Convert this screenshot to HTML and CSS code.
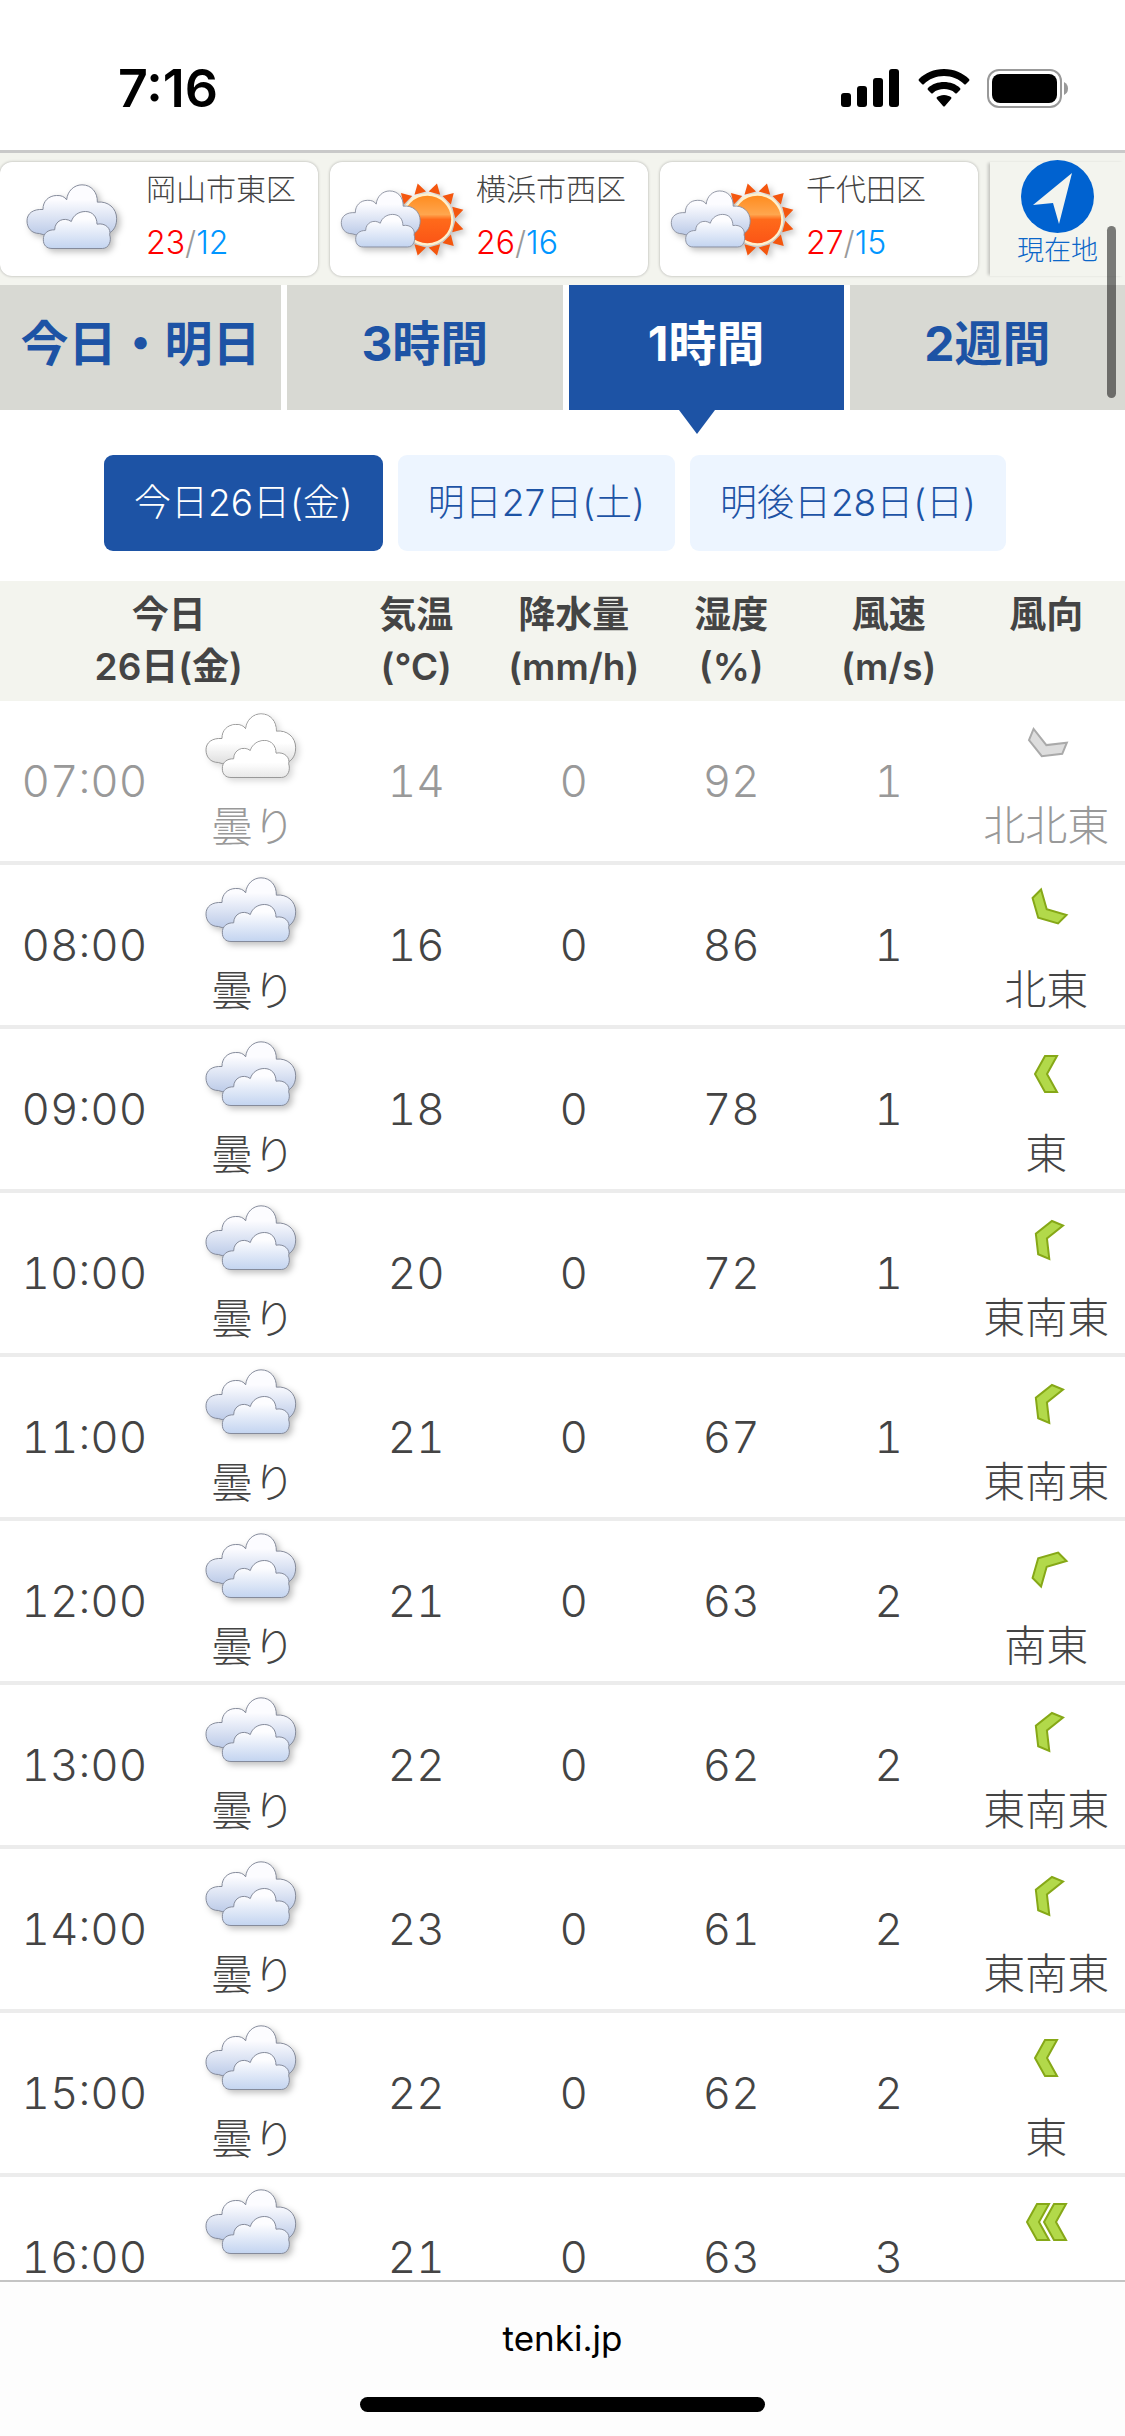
FILE: index.html
```html
<!DOCTYPE html>
<html lang="ja">
<head>
    <meta charset="UTF-8">
    <meta name="viewport" content="width=device-width, initial-scale=1.0">
    <title>1時間天気 - tenki.jp</title>
    <link rel="stylesheet" href="styles.css">
</head>
<body>
    <!-- shared icons -->
    <svg class="defs" aria-hidden="true">
        <defs>
            <linearGradient id="cloudBack" x1="0" y1="0" x2="0" y2="1">
                <stop offset="0.3" stop-color="#fcfcff"/>
                <stop offset="1" stop-color="#bccbe8"/>
            </linearGradient>
            <linearGradient id="cloudFront" x1="0" y1="0" x2="0" y2="1">
                <stop offset="0.2" stop-color="#fdfdff"/>
                <stop offset="1" stop-color="#c3d4f0"/>
            </linearGradient>
            <linearGradient id="sunFill" x1="0" y1="0" x2="0" y2="1">
                <stop offset="0" stop-color="#ff8a1c"/>
                <stop offset="0.4" stop-color="#ffa64e"/>
                <stop offset="0.5" stop-color="#ff6a1a"/>
                <stop offset="1" stop-color="#fb5416"/>
            </linearGradient>
            <path id="ray" d="M-18 -82L0 -112L18 -82Z"/>
            <g id="cloudShape" stroke="#858b9b" stroke-width="3" stroke-linejoin="round">
                <path fill="url(#cloudBack)" d="M46 160C22 160 9 143 9 122C9 100 27 86 57 88C56 64 74 46 98 46C112 45 122 50 128 59C130 33 150 14 174 14C202 14 221 36 220 66C252 62 278 84 278 116C278 144 262 162 238 164L60 164Z"/>
                <path fill="url(#cloudFront)" d="M84 205C68 205 58 195 58 179C57 160 72 148 92 149C92 122 120 109 142 124C148 104 166 94 184 94C206 94 219 110 219 132C245 127 262 146 257 164C263 180 256 205 235 205Z"/>
            </g>
            <symbol id="cloud" viewBox="0 0 300 230">
                <use href="#cloudShape"/>
            </symbol>
            <symbol id="cloudSun" viewBox="0 0 390 230">
                <g transform="translate(268 118)">
                    <g fill="#f4560e">
                        <use href="#ray" transform="rotate(15)"/>
                        <use href="#ray" transform="rotate(45)"/>
                        <use href="#ray" transform="rotate(75)"/>
                        <use href="#ray" transform="rotate(105)"/>
                        <use href="#ray" transform="rotate(135)"/>
                        <use href="#ray" transform="rotate(165)"/>
                        <use href="#ray" transform="rotate(195)"/>
                        <use href="#ray" transform="rotate(225)"/>
                        <use href="#ray" transform="rotate(255)"/>
                        <use href="#ray" transform="rotate(285)"/>
                        <use href="#ray" transform="rotate(315)"/>
                        <use href="#ray" transform="rotate(345)"/>
                    </g>
                    <circle r="75" fill="url(#sunFill)" stroke="#fff0cc" stroke-width="7"/>
                </g>
                <use href="#cloudShape" transform="translate(2 20) scale(0.88)"/>
            </symbol>
            <path id="chevron" d="M-1 -18L11 -18L1 0L11 18L-1 18L-11 0Z"/>
            <symbol id="wind" viewBox="-30 -30 60 60">
                <use href="#chevron"/>
            </symbol>
            <symbol id="windStrong" viewBox="-30 -30 60 60">
                <use href="#chevron" x="-8"/>
                <use href="#chevron" x="9"/>
            </symbol>
        </defs>
    </svg>

    <div class="status-bar">
        <span class="clock">7:16</span>
        <div class="status-icons">
            <svg width="60" height="38" viewBox="0 0 60 38">
                <rect x="0" y="24" width="10" height="14" rx="3"/>
                <rect x="16" y="17" width="10" height="21" rx="3"/>
                <rect x="32" y="9" width="10" height="29" rx="3"/>
                <rect x="48" y="0" width="10" height="38" rx="3"/>
            </svg>
            <svg width="52" height="38" viewBox="0 0 52 38">
                <path d="M26 0C36 0 45 4 51 10Q52 11 51 12L48 15Q47 16 46 15C41 10 34 7 26 7C18 7 11 10 6 15Q5 16 4 15L1 12Q0 11 1 10C7 4 16 0 26 0Z"/>
                <path d="M26 13C32 13 38 15 42 19Q43 20 42 21L39 24Q38 25 37 24C34 21 30 20 26 20C22 20 18 21 15 24Q14 25 13 24L10 21Q9 20 10 19C14 15 20 13 26 13Z"/>
                <path d="M26 26C29 26 31 27 33 28Q34 29 33 30L27 37Q26 38 25 37L19 30Q18 29 19 28C21 27 23 26 26 26Z"/>
            </svg>
            <svg width="82" height="39" viewBox="0 0 82 39">
                <rect x="1" y="1" width="73" height="37" rx="11" fill="none" stroke="#999" stroke-width="2"/>
                <rect x="5" y="5" width="65" height="29" rx="8"/>
                <path d="M77 13Q81 15 81 19.500Q81 24 77 26Z" fill="#999"/>
            </svg>
        </div>
    </div>

    <main class="page">
        <div class="cities">
            <a href="#" class="city">
                <svg class="city-icon cloud"><use href="#cloud"/></svg>
                <span class="city-text">
                    <span class="city-name">岡山市東区</span>
                    <span class="city-temp"><span class="high">23</span>/<span class="low">12</span></span>
                </span>
            </a>
            <a href="#" class="city">
                <svg class="city-icon cloud-sun"><use href="#cloudSun"/></svg>
                <span class="city-text">
                    <span class="city-name">横浜市西区</span>
                    <span class="city-temp"><span class="high">26</span>/<span class="low">16</span></span>
                </span>
            </a>
            <a href="#" class="city">
                <svg class="city-icon cloud-sun"><use href="#cloudSun"/></svg>
                <span class="city-text">
                    <span class="city-name">千代田区</span>
                    <span class="city-temp"><span class="high">27</span>/<span class="low">15</span></span>
                </span>
            </a>
            <button type="button" class="here">
                <svg width="73" height="73" viewBox="0 0 73 73">
                    <circle cx="36.500" cy="36.500" r="36.500" fill="#0062d0"/>
                    <path fill="#f3f4ee" d="M51 13L38 64L32 43L12 45Z"/>
                </svg>
                <span>現在地</span>
            </button>
        </div>

        <nav class="tabs">
            <a href="#">今日・明日</a>
            <a href="#">3時間</a>
            <a href="#" class="active">1時間</a>
            <a href="#">2週間</a>
        </nav>

        <div class="days">
            <button type="button" class="active">今日26日(金)</button>
            <button type="button">明日27日(土)</button>
            <button type="button">明後日28日(日)</button>
        </div>

        <table class="forecast">
            <colgroup>
                <col class="col-wide"><col class="col-wide"><col><col><col><col><col>
            </colgroup>
            <thead>
                <tr>
                    <th colspan="2">今日<br>26日(金)</th>
                    <th>気温<br>(℃)</th>
                    <th>降水量<br>(mm/h)</th>
                    <th>湿度<br>(%)</th>
                    <th>風速<br>(m/s)</th>
                    <th>風向</th>
                </tr>
            </thead>
            <tbody>
                <tr class="past">
                    <td>07:00</td>
                    <td class="pic"><svg class="cloud"><use href="#cloud"/></svg><p>曇り</p></td>
                    <td>14</td><td>0</td><td>92</td><td>1</td>
                    <td class="pic"><svg class="wind nne"><use href="#wind"/></svg><p>北北東</p></td>
                </tr>
                <tr>
                    <td>08:00</td>
                    <td class="pic"><svg class="cloud"><use href="#cloud"/></svg><p>曇り</p></td>
                    <td>16</td><td>0</td><td>86</td><td>1</td>
                    <td class="pic"><svg class="wind ne"><use href="#wind"/></svg><p>北東</p></td>
                </tr>
                <tr>
                    <td>09:00</td>
                    <td class="pic"><svg class="cloud"><use href="#cloud"/></svg><p>曇り</p></td>
                    <td>18</td><td>0</td><td>78</td><td>1</td>
                    <td class="pic"><svg class="wind"><use href="#wind"/></svg><p>東</p></td>
                </tr>
                <tr>
                    <td>10:00</td>
                    <td class="pic"><svg class="cloud"><use href="#cloud"/></svg><p>曇り</p></td>
                    <td>20</td><td>0</td><td>72</td><td>1</td>
                    <td class="pic"><svg class="wind ese"><use href="#wind"/></svg><p>東南東</p></td>
                </tr>
                <tr>
                    <td>11:00</td>
                    <td class="pic"><svg class="cloud"><use href="#cloud"/></svg><p>曇り</p></td>
                    <td>21</td><td>0</td><td>67</td><td>1</td>
                    <td class="pic"><svg class="wind ese"><use href="#wind"/></svg><p>東南東</p></td>
                </tr>
                <tr>
                    <td>12:00</td>
                    <td class="pic"><svg class="cloud"><use href="#cloud"/></svg><p>曇り</p></td>
                    <td>21</td><td>0</td><td>63</td><td>2</td>
                    <td class="pic"><svg class="wind se"><use href="#wind"/></svg><p>南東</p></td>
                </tr>
                <tr>
                    <td>13:00</td>
                    <td class="pic"><svg class="cloud"><use href="#cloud"/></svg><p>曇り</p></td>
                    <td>22</td><td>0</td><td>62</td><td>2</td>
                    <td class="pic"><svg class="wind ese"><use href="#wind"/></svg><p>東南東</p></td>
                </tr>
                <tr>
                    <td>14:00</td>
                    <td class="pic"><svg class="cloud"><use href="#cloud"/></svg><p>曇り</p></td>
                    <td>23</td><td>0</td><td>61</td><td>2</td>
                    <td class="pic"><svg class="wind ese"><use href="#wind"/></svg><p>東南東</p></td>
                </tr>
                <tr>
                    <td>15:00</td>
                    <td class="pic"><svg class="cloud"><use href="#cloud"/></svg><p>曇り</p></td>
                    <td>22</td><td>0</td><td>62</td><td>2</td>
                    <td class="pic"><svg class="wind"><use href="#wind"/></svg><p>東</p></td>
                </tr>
                <tr>
                    <td>16:00</td>
                    <td class="pic"><svg class="cloud"><use href="#cloud"/></svg></td>
                    <td>21</td><td>0</td><td>63</td><td>3</td>
                    <td class="pic"><svg class="wind"><use href="#windStrong"/></svg></td>
                </tr>
            </tbody>
        </table>
        <div class="scroll-thumb"></div>
    </main>

    <footer class="browser-bar">
        <a href="#">tenki.jp</a>
        <div class="home-bar"></div>
    </footer>
</body>
</html>
```

FILE: styles.css
```css
* { margin: 0; padding: 0; box-sizing: border-box; }
body { font-family: Inter, "Noto Sans CJK JP", sans-serif; font-weight: 300; color: #444; background: #fff; height: 100vh; display: flex; flex-direction: column; overflow: hidden; }
a { text-decoration: none; color: inherit; }
button { border: none; background: none; font: inherit; cursor: pointer; }
svg { display: block; flex-shrink: 0; }
.defs { position: absolute; width: 0; height: 0; }

.status-bar { display: flex; align-items: center; justify-content: space-between; height: 153px; padding: 26px 56px 0 118px; border-bottom: 3px solid #c9c9c9; color: #000; flex-shrink: 0; }
.clock { font-size: 52px; font-weight: 600; }
.status-icons { display: flex; align-items: center; gap: 17px; }

.page { flex: 1; min-height: 0; overflow: hidden; position: relative; }

.cities { display: flex; gap: 12px; height: 132px; padding: 9px 0; background: #f3f4ee; }
.city { flex: 0 0 318px; display: flex; background: #fff; border-radius: 12px; box-shadow: 0 0 3px rgba(0,0,0,0.3); }
.city-icon { margin: 18px 0 0 24px; }
.cloud { width: 100px; height: 77px; filter: drop-shadow(3px 3px 3px rgba(0,0,0,0.25)); }
.cloud-sun { width: 130px; height: 77px; margin-left: 8px; filter: drop-shadow(3px 3px 3px rgba(0,0,0,0.25)); }
.city-text { margin-left: auto; width: 172px; }
.city-name { display: block; font-size: 30px; line-height: 54px; }
.city-temp { display: block; font-size: 32px; line-height: 54px; color: #999; }
.high { color: #f00; }
.low { color: #0096ff; }
.here { flex: 1; display: flex; flex-direction: column; align-items: center; color: #0b66c8; font-size: 27px; line-height: 36px; box-shadow: -3px 0 3px -1px rgba(0,0,0,0.2); }
.here svg { margin-top: -2px; }

.tabs { display: grid; grid-template-columns: 25% 1fr 1fr 1fr; gap: 6px; }
.tabs a { position: relative; height: 125px; line-height: 118px; background: #d8d9d3; color: #1d53a5; font-size: 48px; font-weight: bold; text-align: center; white-space: nowrap; }
.tabs a.active { background: #1d53a5; color: #fff; }
.tabs a.active::after { content: ""; position: absolute; top: 100%; left: 110px; border: 18px solid transparent; border-top: 24px solid #1d53a5; border-bottom: none; }

.days { display: flex; justify-content: center; gap: 15px; padding: 45px 15px 30px 0; }
.days button { height: 96px; padding: 0 30px 6px; border-radius: 9px; background: #edf5ff; color: #1d53a5; font-size: 37px; white-space: nowrap; }
.days button.active { background: #1d53a5; color: #fff; }

.forecast { width: 100%; table-layout: fixed; border-collapse: separate; border-spacing: 0; text-align: center; }
.col-wide { width: 15%; }
.forecast th { background: #f3f4ee; font-size: 37px; line-height: 52px; font-weight: 600; padding: 8px 0; vertical-align: top; white-space: nowrap; }
.forecast td { height: 164px; border-bottom: 4px solid #ececec; font-size: 44px; line-height: 44px; font-variant-numeric: tabular-nums; }
.forecast .pic { vertical-align: top; }
.pic svg { margin: 8px auto 0; }
.pic p { margin-top: 15px; font-size: 42px; line-height: 52px; white-space: nowrap; }
.pic .wind { width: 60px; height: 60px; margin-top: 15px; margin-bottom: 24px; fill: #b2d94a; stroke: #86a817; stroke-width: 2; }
.wind.ese { transform: rotate(22.5deg); }
.wind.se { transform: rotate(45deg); }
.wind.ne { transform: rotate(-45deg); }
.wind.nne { transform: rotate(-67.5deg); }
.past { color: #999; }
.past .cloud { filter: grayscale(1) brightness(1.1) drop-shadow(3px 3px 3px rgba(0,0,0,0.15)); }
.past .wind { fill: #ddd; stroke: #aaa; }

.scroll-thumb { position: absolute; top: 73px; right: 9px; width: 9px; height: 172px; border-radius: 5px; background: rgba(0,0,0,0.5); }

.browser-bar { flex-shrink: 0; height: 156px; border-top: 2px solid #c4c4c4; background: #fdfdfd; display: flex; flex-direction: column; align-items: center; justify-content: space-between; padding-bottom: 24px; }
.browser-bar a { color: #000; font-size: 35px; font-weight: 400; line-height: 112px; }
.home-bar { width: 36%; height: 15px; border-radius: 8px; background: #000; }
```
